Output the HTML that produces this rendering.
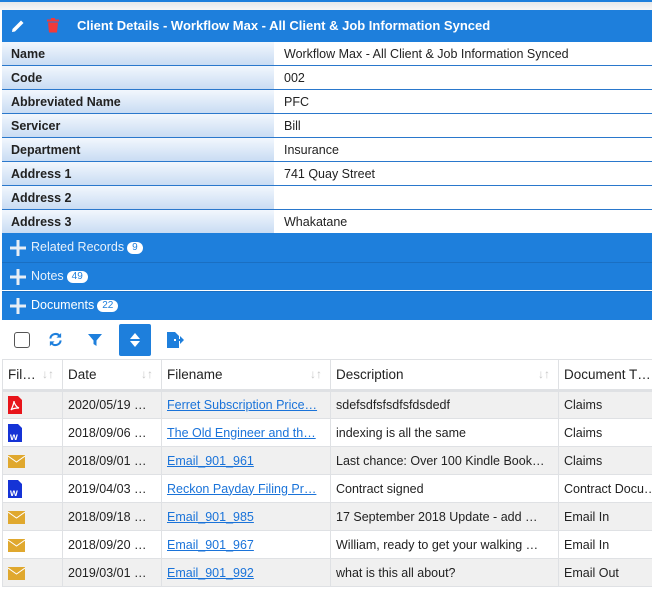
<!DOCTYPE html>
<html><head><style>
*{margin:0;padding:0;box-sizing:border-box}
body{width:652px;height:590px;overflow:hidden;background:#fff;font-family:"Liberation Sans",Arial,sans-serif;font-size:13px;color:#222;position:relative}
.a{position:absolute}
.top{left:0;top:0;width:652px;height:10px;background:linear-gradient(#1e7fdc 0,#1e7fdc 2px,#e6e8ea 2px,#f7f7f7 10px)}
.hdr{left:2px;top:10px;width:650px;height:32px;background:#1e7fdc;color:#fff;font-weight:bold;font-size:13px}
.row{left:2px;width:650px;height:24px;border-bottom:1px solid #2a78cc}
.lab{position:absolute;left:0;top:0;width:272px;height:23px;background:linear-gradient(#f2f7fd,#c9dcf3);font-weight:bold;padding:5px 9px;font-size:12.5px}
.val{position:absolute;left:272px;top:0;right:0;height:23px;padding:5px 10px;font-size:12.5px}
.sec{left:2px;width:650px;height:28px;background:#1e7fdc;color:#e8f1fb;font-size:12.5px;padding:6px 0 0 29px}
.sec .p{position:absolute;left:8px;top:6px}
.bd{display:inline-block;background:#fff;color:#1e7fdc;border-radius:7px;font-size:10px;padding:0 5px;line-height:12px;margin-left:3px;vertical-align:1px}
table{position:absolute;left:2px;top:359px;border-collapse:collapse;width:660px;table-layout:fixed}
td,th{border:1px solid #dfe1e4;height:28px;padding:0 5px;font-weight:normal;text-align:left;white-space:nowrap;overflow:hidden;font-size:12.5px}
th{height:31px;font-size:13.5px;border-bottom:3px solid #dfe1e4;position:relative}
th .s{position:absolute;right:8px;top:7px;color:#c8c8c8;font-size:12px}
tr.g td{background:#f0f0f0}
td svg{vertical-align:middle}
a{color:#1a73d9;text-decoration:underline}
</style></head><body>
<div class="a top"></div>
<div class="a hdr">
 <svg class="a" style="left:9px;top:9px" width="14" height="14" viewBox="0 0 14 14"><path d="M1 13 L1.5 10 L10 1.5 L12.5 4 L4 12.5 Z" fill="#fff"/></svg>
 <svg class="a" style="left:45px;top:8px" width="12" height="15" viewBox="0 0 12 15"><rect x="0" y="1.5" width="12" height="2" fill="#f03a3a"/><rect x="4" y="0" width="4" height="2" fill="#f03a3a"/><path d="M1 4.5h10l-1 10H2z" fill="#f03a3a"/></svg>
 <span class="a" style="left:75px;top:8px">Client Details - Workflow Max - All Client &amp; Job Information Synced</span>
</div>
<div class="a row" style="top:42px"><div class="lab">Name</div><div class="val">Workflow Max - All Client &amp; Job Information Synced</div></div>
<div class="a row" style="top:66px"><div class="lab">Code</div><div class="val">002</div></div>
<div class="a row" style="top:90px"><div class="lab">Abbreviated Name</div><div class="val">PFC</div></div>
<div class="a row" style="top:114px"><div class="lab">Servicer</div><div class="val">Bill</div></div>
<div class="a row" style="top:138px"><div class="lab">Department</div><div class="val">Insurance</div></div>
<div class="a row" style="top:162px"><div class="lab">Address 1</div><div class="val">741 Quay Street</div></div>
<div class="a row" style="top:186px"><div class="lab">Address 2</div><div class="val"></div></div>
<div class="a row" style="top:210px;border:none"><div class="lab">Address 3</div><div class="val">Whakatane</div></div>
<div class="a sec" style="top:233px;height:29px;padding-top:7px"><svg class="p" style="top:7px" width="16" height="16"><path d="M6.5 0h3v16h-3zM0 6.5h16v3H0z" fill="#e8eef5"/></svg>Related Records<span class="bd">9</span></div>
<div class="a sec" style="top:262px;border-top:1px solid #1a6fc2"><svg class="p" width="16" height="16"><path d="M6.5 0h3v16h-3zM0 6.5h16v3H0z" fill="#e8eef5"/></svg>Notes<span class="bd">49</span></div>
<div class="a sec" style="top:291px;border-top:1px solid #1a6fc2;height:29px;color:#fff"><svg class="p" width="16" height="16"><path d="M6.5 0h3v16h-3zM0 6.5h16v3H0z" fill="#e8eef5"/></svg>Documents<span class="bd">22</span></div>
<div class="a" style="left:14px;top:332px;width:16px;height:16px;border:1.5px solid #555;border-radius:3px"></div>
<svg class="a" style="left:48px;top:332px" width="15" height="15" viewBox="0 0 16 16"><path d="M2.5 7A5.5 5.5 0 0 1 12.5 4.5M13.5 9A5.5 5.5 0 0 1 3.5 11.5" stroke="#1e7fdc" stroke-width="2.2" fill="none"/><path d="M14 1v5h-5zM2 15v-5h5z" fill="#1e7fdc"/></svg>
<svg class="a" style="left:88px;top:333px" width="14" height="14" viewBox="0 0 14 14"><path d="M0 1h14L8.5 7.5V13L5.5 11V7.5z" fill="#1e7fdc"/></svg>
<div class="a" style="left:119px;top:324px;width:32px;height:32px;background:#1e7fdc;border-radius:2px"></div>
<svg class="a" style="left:130px;top:333px" width="10" height="14" viewBox="0 0 10 14"><path d="M5 0L10 6H0zM5 14L0 8h10z" fill="#fff"/></svg>
<svg class="a" style="left:167px;top:332px" width="17" height="16" viewBox="0 0 17 16"><path d="M0 0h8l4 4v3H7v2h5v7H0z" fill="#1e7fdc"/><path d="M9 7h4V4l4 4-4 4V9H9z" fill="#1e7fdc"/></svg>
<table>
<colgroup><col style="width:60px"><col style="width:99px"><col style="width:169px"><col style="width:228px"><col style="width:104px"></colgroup>
<tr><th>Fil…<span class="s">↓↑</span></th><th>Date<span class="s">↓↑</span></th><th>Filename<span class="s">↓↑</span></th><th>Description<span class="s">↓↑</span></th><th>Document T…</th></tr>
<tr class="g"><td><svg width="14" height="18"><path d="M0 0h10l4 4v14H0z" fill="#e8141a"/><path d="M3 14C5 10 6 6 6 5 6 7 8 11 11 12 7 12 4 13 3 14z" stroke="#fff" stroke-width="1.2" fill="none"/></svg></td><td>2020/05/19 …</td><td><a>Ferret Subscription Price…</a></td><td>sdefsdfsfsdfsfdsdedf</td><td>Claims</td></tr>
<tr><td><svg width="14" height="18"><path d="M0 0h10l4 4v14H0z" fill="#1533d6"/><text x="2" y="16" font-size="10" font-weight="bold" fill="#fff" font-family="Liberation Sans">w</text></svg></td><td>2018/09/06 …</td><td><a>The Old Engineer and th…</a></td><td>indexing is all the same</td><td>Claims</td></tr>
<tr class="g"><td><svg width="17" height="13"><rect width="17" height="13" fill="#e0a82e"/><path d="M0 1l8.5 6L17 1" stroke="#fff" fill="none"/></svg></td><td>2018/09/01 …</td><td><a>Email_901_961</a></td><td>Last chance: Over 100 Kindle Book…</td><td>Claims</td></tr>
<tr><td><svg width="14" height="18"><path d="M0 0h10l4 4v14H0z" fill="#1533d6"/><text x="2" y="16" font-size="10" font-weight="bold" fill="#fff" font-family="Liberation Sans">w</text></svg></td><td>2019/04/03 …</td><td><a>Reckon Payday Filing Pr…</a></td><td>Contract signed</td><td>Contract Docu…</td></tr>
<tr class="g"><td><svg width="17" height="13"><rect width="17" height="13" fill="#e0a82e"/><path d="M0 1l8.5 6L17 1" stroke="#fff" fill="none"/></svg></td><td>2018/09/18 …</td><td><a>Email_901_985</a></td><td>17 September 2018 Update - add …</td><td>Email In</td></tr>
<tr><td><svg width="17" height="13"><rect width="17" height="13" fill="#e0a82e"/><path d="M0 1l8.5 6L17 1" stroke="#fff" fill="none"/></svg></td><td>2018/09/20 …</td><td><a>Email_901_967</a></td><td>William, ready to get your walking …</td><td>Email In</td></tr>
<tr class="g"><td><svg width="17" height="13"><rect width="17" height="13" fill="#e0a82e"/><path d="M0 1l8.5 6L17 1" stroke="#fff" fill="none"/></svg></td><td>2019/03/01 …</td><td><a>Email_901_992</a></td><td>what is this all about?</td><td>Email Out</td></tr>
</table>
</body></html>
